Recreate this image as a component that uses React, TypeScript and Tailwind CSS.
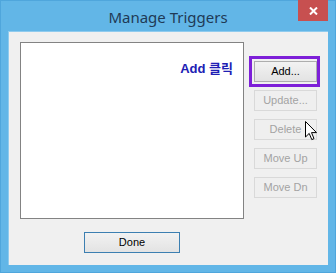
import React from 'react';

const sans = { fontFamily: '"Liberation Sans", Arial, sans-serif' };

const Btn: React.FC<{ label: string; disabled?: boolean; className?: string }> = ({ label, disabled, className = '' }) => (
  <button
    type="button"
    className={`h-[21px] border text-[11px] leading-none flex items-center justify-center ${
      disabled
        ? 'border-[#d9d9d9] bg-[#efefef] text-[#a3a3a3]'
        : 'border-[#adadad] bg-gradient-to-b from-[#f2f2f2] to-[#e3e3e3] text-black'
    } ${className}`}
    style={sans}
  >
    {label}
  </button>
);

const Cursor = () => (
  <svg width="13" height="20" viewBox="0 0 13 20" className="absolute left-[51px] top-[2px]">
    <path d="M0.5 0.5 L0.5 16 L4.2 12.4 L6.8 18.6 L9 17.6 L6.5 11.6 L11.5 11.6 Z" fill="#fff" stroke="#000" strokeWidth="1" strokeLinejoin="miter" />
  </svg>
);

export default function App() {
  return (
    <div className="w-[336px] h-[273px] bg-[#62b6e7] border border-[#4fa6dc] flex flex-col select-none">
      {/* title bar */}
      <div className="h-[30px] relative flex items-center justify-center">
        <span className="text-[15px] text-[#1f3a56] pt-[2px]" style={{ fontFamily: '"Noto Sans", "Open Sans", sans-serif' }}>
          Manage Triggers
        </span>
        <div className="absolute right-[7px] -top-px w-[30px] h-[21px] bg-[#c75050] flex items-center justify-center">
          <svg width="9" height="8" viewBox="0 0 9 8">
            <path d="M1 0.5 L8 7.5 M8 0.5 L1 7.5" stroke="#fff" strokeWidth="2" />
          </svg>
        </div>
      </div>

      {/* client area */}
      <div className="mx-[7px] h-[234px] bg-[#f0f0f0] border-t border-l border-[#8fcbee] flex flex-col">
        <div className="flex items-start">
          {/* list box */}
          <div className="ml-[11px] mt-[10px] w-[224px] h-[177px] bg-white border border-[#838383] flex justify-end">
            <span className="mt-[18px] mr-[10px] text-[13px] leading-[16px] font-bold text-[#2020b4]" style={{ fontFamily: '"Liberation Sans", "Noto Sans CJK KR", sans-serif' }}>
              Add 클릭
            </span>
          </div>

          {/* buttons */}
          <div className="ml-[10px] mt-[29px] w-[63px] flex flex-col gap-[8px]">
            <div className="relative">
              <div className="absolute -left-[5px] -top-[5px] -right-[3px] -bottom-[5px] border-[3px] border-[#7d1fd8]" />
              <Btn label="Add..." className="w-full relative" />
            </div>
            <Btn label="Update..." disabled className="w-full" />
            <div className="relative">
              <Btn label="Delete" disabled className="w-full" />
              <Cursor />
            </div>
            <Btn label="Move Up" disabled className="w-full" />
            <Btn label="Move Dn" disabled className="w-full" />
          </div>
        </div>

        <div className="ml-[75px] mt-[13px]">
          <button
            type="button"
            className="w-[96px] h-[21px] border border-[#3c7fb1] bg-gradient-to-b from-[#f2f2f2] to-[#e3e3e3] text-[11px] text-black flex items-center justify-center"
            style={sans}
          >
            Done
          </button>
        </div>
      </div>
    </div>
  );
}
